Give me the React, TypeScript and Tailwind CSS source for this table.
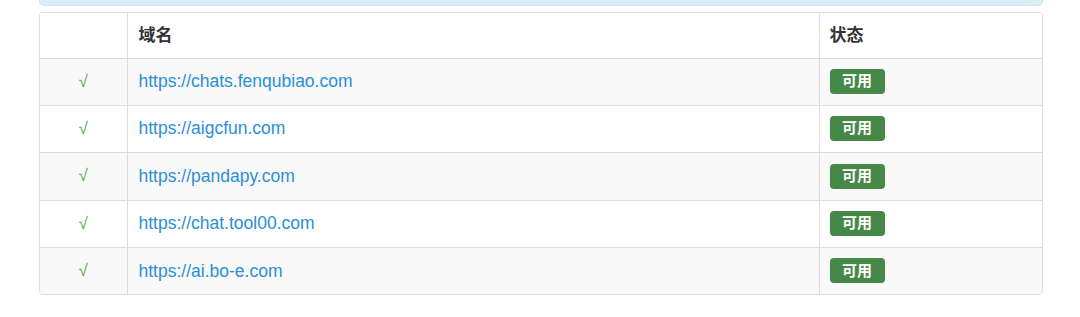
const rows = [
  "https://chats.fenqubiao.com",
  "https://aigcfun.com",
  "https://pandapy.com",
  "https://chat.tool00.com",
  "https://ai.bo-e.com",
];

export default function App() {
  return (
    <div
      className="h-[317px] w-[1080px] bg-white pl-[39px]"
      style={{ fontFamily: '"Liberation Sans", "Noto Sans CJK SC", sans-serif' }}
    >
      <div className="w-[1004px]">
        {/* alert box, only its bottom edge is visible */}
        <div className="h-[6px] rounded-b-[5px] border border-t-0 border-[#cfe6f0] bg-[#d9edf7]" />

        <div className="mt-[6px] overflow-hidden rounded-[4px] border border-[#dddddd]">
          <table className="w-full border-collapse">
            <thead>
              <tr className="h-[45px] bg-white">
                <th className="w-[87px] border-b border-r border-[#dddddd]" />
                <th className="border-b border-r border-[#dddddd] pl-[11px] text-left text-[17px] font-bold text-[#333]">
                  域名
                </th>
                <th className="w-[223px] border-b border-[#dddddd] pl-[10px] text-left text-[17px] font-bold text-[#333]">
                  状态
                </th>
              </tr>
            </thead>
            <tbody>
              {rows.map((url, i) => (
                <tr
                  key={url}
                  className={`${i === 2 ? "h-[48px]" : "h-[47px]"} ${i % 2 === 0 ? "bg-[#f9f9f9]" : "bg-white"}`}
                >
                  <td
                    className={`border-r border-[#dddddd] text-center text-[17px] text-[#4cae4c] ${i < rows.length - 1 ? "border-b" : ""}`}
                  >
                    √
                  </td>
                  <td
                    className={`border-r border-[#dddddd] pl-[11px] text-[17.5px] text-[#2a8fd6] ${i < rows.length - 1 ? "border-b" : ""}`}
                  >
                    {url}
                  </td>
                  <td
                    className={`border-[#dddddd] pl-[10px] ${i < rows.length - 1 ? "border-b" : ""}`}
                  >
                    <span className="inline-flex h-[25px] w-[55px] items-center justify-center rounded-[4px] bg-[#468847] text-[15px] font-bold text-white">
                      可用
                    </span>
                  </td>
                </tr>
              ))}
            </tbody>
          </table>
        </div>
      </div>
    </div>
  );
}
